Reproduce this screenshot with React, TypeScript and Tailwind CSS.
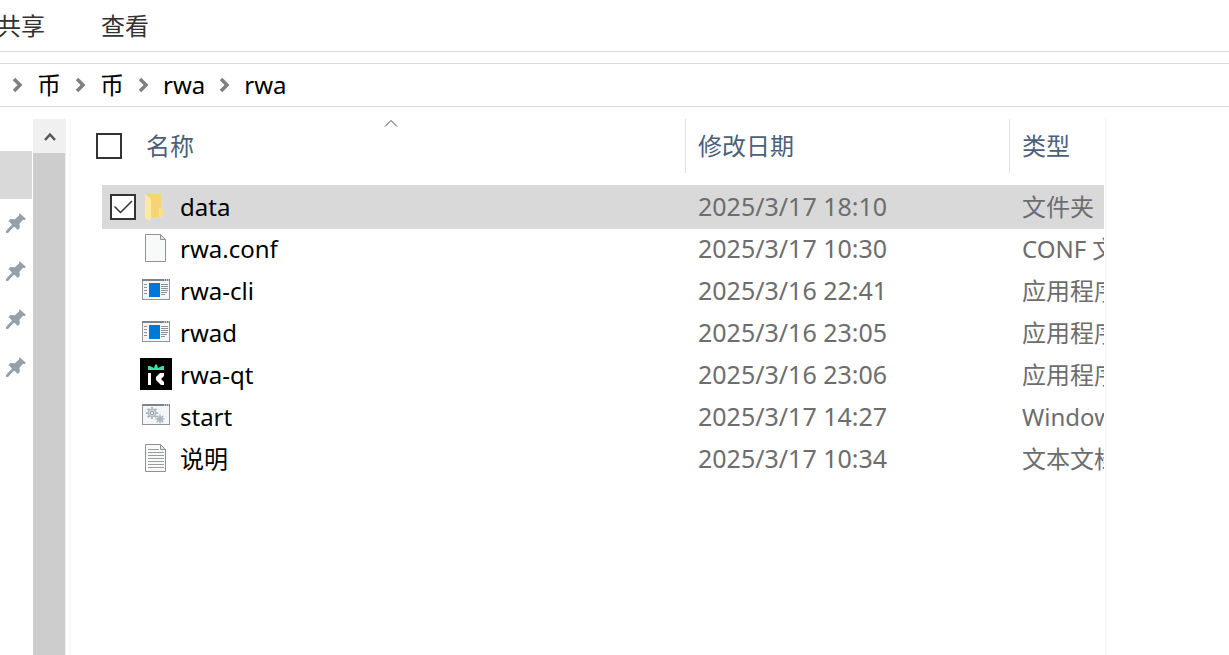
import { useState } from "react";

type IconType = "folder" | "blank" | "app" | "rwa" | "batch" | "text";

interface IFile {
  name: string;
  date: string;
  type: string;
  icon: IconType;
}

const files: IFile[] = [
  { name: "data", date: "2025/3/17 18:10", type: "文件夹", icon: "folder" },
  { name: "rwa.conf", date: "2025/3/17 10:30", type: "CONF 文件", icon: "blank" },
  { name: "rwa-cli", date: "2025/3/16 22:41", type: "应用程序", icon: "app" },
  { name: "rwad", date: "2025/3/16 23:05", type: "应用程序", icon: "app" },
  { name: "rwa-qt", date: "2025/3/16 23:06", type: "应用程序", icon: "rwa" },
  { name: "start", date: "2025/3/17 14:27", type: "Windows 批处理文件", icon: "batch" },
  { name: "说明", date: "2025/3/17 10:34", type: "文本文档", icon: "text" },
];

const path = ["币", "币", "rwa", "rwa"];

const WindowFrame: React.FC = () => (
  <>
    <rect x="2.5" y="5.5" width="27" height="20" fill="#f5f6f7" stroke="#919596" />
    <path d="M2 6h28" stroke="#7f8587" strokeWidth="2" />
    <path d="M24 6h1M26 6h1M28 6h1" stroke="#fff" />
  </>
);

const Gear: React.FC<{ cx: number; cy: number; r: number }> = ({ cx, cy, r }) => (
  <g fill="none">
    <circle
      cx={cx}
      cy={cy}
      r={r}
      pathLength="32"
      stroke="#a9b5bd"
      strokeWidth="2"
      strokeDasharray="2 2"
      strokeDashoffset="1"
    />
    <circle cx={cx} cy={cy} r={r - 1} fill="#cdd5da" stroke="#a9b5bd" />
    <circle cx={cx} cy={cy} r={r / 3} fill="#f5f6f7" stroke="#8d989f" />
  </g>
);

const FileIcon: React.FC<{ type: IconType }> = ({ type }) => (
  <svg viewBox="0 0 32 32" className="mb-0.5 size-8 shrink-0" aria-hidden="true">
    {type === "folder" && (
      <>
        <path d="M7 4h14v14l2 2v7H8z" fill="#f6d375" />
        <path d="M19 18h2l2 2v7h-4z" fill="#fbdf8e" />
        <path d="M5 4l6 5v18l-1 4-5-3z" fill="#ffe8a2" />
      </>
    )}
    {(type === "blank" || type === "text") && (
      <>
        <path d="M5.5 2.5h15l5 5v22h-20z" fill="#f8f9f9" stroke="#8f9294" />
        <path d="M20.5 2.5v5h5z" fill="#e3e6e8" stroke="#8f9294" />
      </>
    )}
    {type === "text" && (
      <path
        d="M8 7.5h11M8 10.5h16M8 13.5h16M8 16.5h16M8 19.5h16M8 22.5h16M8 25.5h16"
        stroke="#9a9c9d"
      />
    )}
    {type === "app" && (
      <>
        <WindowFrame />
        <rect x="9" y="9" width="11" height="14" fill="#0078d7" />
        <path
          d="M4 10.5h3M4 13.5h3M4 16.5h3M4 19.5h3M21 10.5h7M21 12.5h7M21 14.5h7M21 16.5h7M21 18.5h6M21 20.5h4"
          stroke="#8e9294"
        />
      </>
    )}
    {type === "batch" && (
      <g transform="translate(0 -1)">
        <WindowFrame />
        <Gear cx={12} cy={14} r={5} />
        <Gear cx={20} cy={20} r={3.5} />
      </g>
    )}
    {type === "rwa" && (
      <>
        <path d="M0 0h32v32H0z" fill="#000" />
        <path d="M8 8h2l4 2 1-3 1-1 1 1 1 3 4-2h2v4H8z" fill="#2be8a8" />
        <path d="M8 15h3v12H8z" fill="#fff" />
        <path d="M20 15h4v3l-3 3 3 3v3h-3l-5-5v-3z" fill="#fff" />
      </>
    )}
  </svg>
);

const PinIcon: React.FC = () => (
  <svg viewBox="0 0 20 20" className="size-5" aria-hidden="true">
    <path
      d="M13.5 0L20 6l-1.500 1-1.500-.2-3.500 4 .3 4-1.800 2.200-4-3.500L2 20H0v-2l6-6.500L2.500 8l2-2 4.500.2 4-3.700z"
      fill="#95a0a7"
    />
  </svg>
);

const ChevronIcon: React.FC = () => (
  <svg viewBox="0 0 11 16" className="h-4 w-[11px] shrink-0" aria-hidden="true">
    <path d="M2 2l6 6-6 6" fill="none" stroke="#808080" strokeWidth="3.500" />
  </svg>
);

interface ICheck {
  label: string;
  checked: boolean;
  onChange: () => void;
}

const CheckComponent: React.FC<ICheck> = ({ label, checked, onChange }) => (
  <label className="relative block size-[26px]">
    <input
      type="checkbox"
      aria-label={label}
      checked={checked}
      onChange={onChange}
      className="block size-[26px] appearance-none border-2 border-[#333] bg-white"
    />
    {checked && (
      <svg viewBox="0 0 26 26" className="pointer-events-none absolute inset-0 size-[26px]">
        <path d="M4.500 12.500l6 6L22 7" fill="none" stroke="#333" strokeWidth="1.500" />
      </svg>
    )}
  </label>
);

const App: React.FC = () => {
  const [selected, setSelected] = useState<string[]>(["data"]);

  const toggle = (name: string): void => {
    setSelected(
      selected.includes(name)
        ? selected.filter((e) => e !== name)
        : [...selected, name]
    );
  };

  const toggleAll = (): void => {
    setSelected(selected.length === files.length ? [] : files.map((e) => e.name));
  };

  return (
    <div className="flex h-screen flex-col overflow-hidden bg-white font-['Noto_Sans','Noto_Sans_CJK_SC',sans-serif] text-2xl/8 text-black">
      <div className="-ml-[3px] flex h-[52px] shrink-0 items-center gap-14 border-b border-[#d9d9d9] text-[#333]">
        <button>共享</button>
        <button>查看</button>
      </div>
      <nav className="mt-[11px] flex h-11 shrink-0 items-center gap-3.5 border-y border-[#d9d9d9] pl-3">
        {path.map((item, i) => (
          <div key={i} className="flex items-center gap-3.5">
            <ChevronIcon />
            <button>{item}</button>
          </div>
        ))}
      </nav>

      <main className="flex min-h-0 flex-1 pt-3">
        <aside className="mr-px w-8 shrink-0 pt-8">
          <div className="h-12 bg-[#d9d9d9]" />
          {[1, 2, 3, 4].map((e) => (
            <div key={e} className="flex h-12 items-center pl-1.5">
              <PinIcon />
            </div>
          ))}
        </aside>
        <div className="flex w-[33px] shrink-0 flex-col bg-[#f0f0f0]">
          <button
            aria-label="向上滚动"
            className="flex h-[34px] items-center justify-center"
          >
            <svg viewBox="0 0 12 12" className="size-3">
              <path d="M1 10l5-5.500 5 5.500" fill="none" stroke="#555" strokeWidth="2.500" />
            </svg>
          </button>
          <div className="mr-px flex-1 bg-[#cdcdcd]" />
        </div>

        <section className="ml-[3px] min-w-0 flex-1 overflow-hidden border-x-2 border-[#f7f7f7] pr-px pl-[25px]">
          <table className="w-full table-fixed border-separate border-spacing-0 text-left">
            <colgroup>
              <col className="w-1.5" />
              <col className="w-9" />
              <col />
              <col className="w-[324px]" />
              <col className="w-[95px]" />
            </colgroup>
            <thead className="text-[#4c607a]">
              <tr>
                <th colSpan={3} className="p-0 pb-[13px] font-normal">
                  <div className="relative flex h-[54px] items-center gap-6">
                    <CheckComponent
                      label="全选"
                      checked={selected.length === files.length}
                      onChange={toggleAll}
                    />
                    <button>名称</button>
                    <svg
                      viewBox="0 0 14 8"
                      className="absolute top-0 left-1/2 h-2 w-3.5 -translate-x-1/2"
                    >
                      <path d="M1 7.500l6-6 6 6" fill="none" stroke="#444" />
                    </svg>
                  </div>
                </th>
                <th className="p-0 pb-[13px] font-normal">
                  <div className="flex h-[54px] items-center border-l border-[#e2e2e2] pl-3">
                    <button>修改日期</button>
                  </div>
                </th>
                <th className="p-0 pb-[13px] font-normal">
                  <div className="flex h-[54px] items-center border-l border-[#e2e2e2] pl-3">
                    <button>类型</button>
                  </div>
                </th>
              </tr>
            </thead>
            <tbody>
              {files.map((file) => {
                const active = selected.includes(file.name);
                const cell = active
                  ? "bg-[#d9d9d9] shadow-[0_1px_0_#d9d9d9,0_-1px_0_#d9d9d9]"
                  : "";
                return (
                  <tr key={file.name} className="h-[42px]">
                    <td className="p-0" />
                    <td className={`p-0 pl-2 ${cell}`}>
                      {active && (
                        <CheckComponent
                          label={file.name}
                          checked
                          onChange={() => toggle(file.name)}
                        />
                      )}
                    </td>
                    <td className={`p-0 pl-0.5 ${cell}`} onClick={() => toggle(file.name)}>
                      <div className="flex items-center gap-2">
                        <FileIcon type={file.icon} />
                        <span>{file.name}</span>
                      </div>
                    </td>
                    <td
                      className={`p-0 pb-0.5 pl-[13px] text-[25px]/8 text-[#6d6d6d] ${cell}`}
                    >
                      {file.date}
                    </td>
                    <td className={`p-0 pl-[13px] text-[#6d6d6d] ${cell}`}>
                      <div className="overflow-hidden whitespace-nowrap">{file.type}</div>
                    </td>
                  </tr>
                );
              })}
            </tbody>
          </table>
        </section>
        <aside className="w-[122px] shrink-0" />
      </main>
    </div>
  );
};

export default App;
